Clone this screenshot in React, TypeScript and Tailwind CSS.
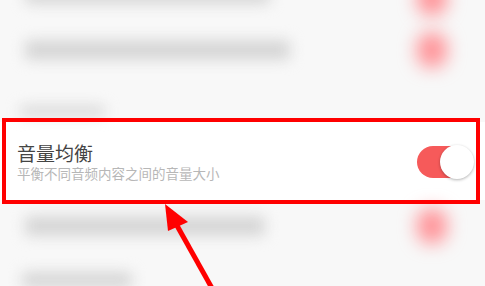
import React from "react";

const Bar = ({ w, h = "h-[14px]" }: { w: string; h?: string }) => (
  <div className={`${w} ${h} rounded-sm bg-[#d6d6d6] blur-[7px]`} />
);

const Pink = () => <div className="w-[30px] h-[36px] rounded-full bg-[#ff9297] blur-[9px]" />;

export default function App() {
  return (
    <div
      className="relative w-[485px] h-[286px] overflow-hidden bg-[#f8f8f8]"
      style={{ fontFamily: '"Noto Sans CJK SC", "Noto Sans", sans-serif' }}
    >
      <div className="flex flex-col">
        {/* top partial row */}
        <div className="h-[20px] flex items-start justify-between pl-[25px] pr-[38px]">
          <div className="-mt-[12px]">
            <Bar w="w-[245px]" h="h-[16px]" />
          </div>
          <div className="-mt-[20px]">
            <Pink />
          </div>
        </div>
        {/* row 1 */}
        <div className="h-[60px] flex items-center justify-between pl-[25px] pr-[38px]">
          <Bar w="w-[265px]" h="h-[20px]" />
          <Pink />
        </div>
        <div className="h-[42px] flex items-end pl-[20px] pb-[6px]">
          <Bar w="w-[85px]" h="h-[10px]" />
        </div>
        {/* highlighted row */}
        <div className="h-[78px] bg-white flex items-start justify-between pl-[17px] pr-[11px]">
          <div className="flex flex-col pt-[19px]">
            <div className="text-[19px] leading-[24px] text-[#444444]">音量均衡</div>
            <div className="text-[13.5px] leading-[16px] text-[#b7b7b7]">平衡不同音频内容之间的音量大小</div>
          </div>
          <div className="relative mt-[23px] w-[57px] h-[34px]">
            <div className="absolute left-0 top-[1px] w-[52px] h-[32px] rounded-full bg-[#f65a5a]" />
            <div className="absolute right-0 top-0 w-[34px] h-[34px] rounded-full bg-white shadow-[0_1px_3px_rgba(0,0,0,0.3)]" />
          </div>
        </div>
        {/* row 3 */}
        <div className="h-[52px] flex items-center justify-between pl-[25px] pr-[38px]">
          <Bar w="w-[240px]" h="h-[20px]" />
          <Pink />
        </div>
        {/* row 4 */}
        <div className="h-[56px] flex items-center pl-[22px]">
          <Bar w="w-[110px]" h="h-[16px]" />
        </div>
      </div>

      {/* annotation box */}
      <div className="absolute left-[2px] top-[118px] w-[478px] h-[86px] border-4 border-[#ff0000]" />
      {/* arrow */}
      <svg className="absolute left-0 top-0" width="485" height="286" viewBox="0 0 485 286">
        <line x1="213" y1="290" x2="175" y2="222" stroke="#ff0000" strokeWidth="5" />
        <polygon points="165,204 168,231 188,222" fill="#ff0000" />
      </svg>
    </div>
  );
}
